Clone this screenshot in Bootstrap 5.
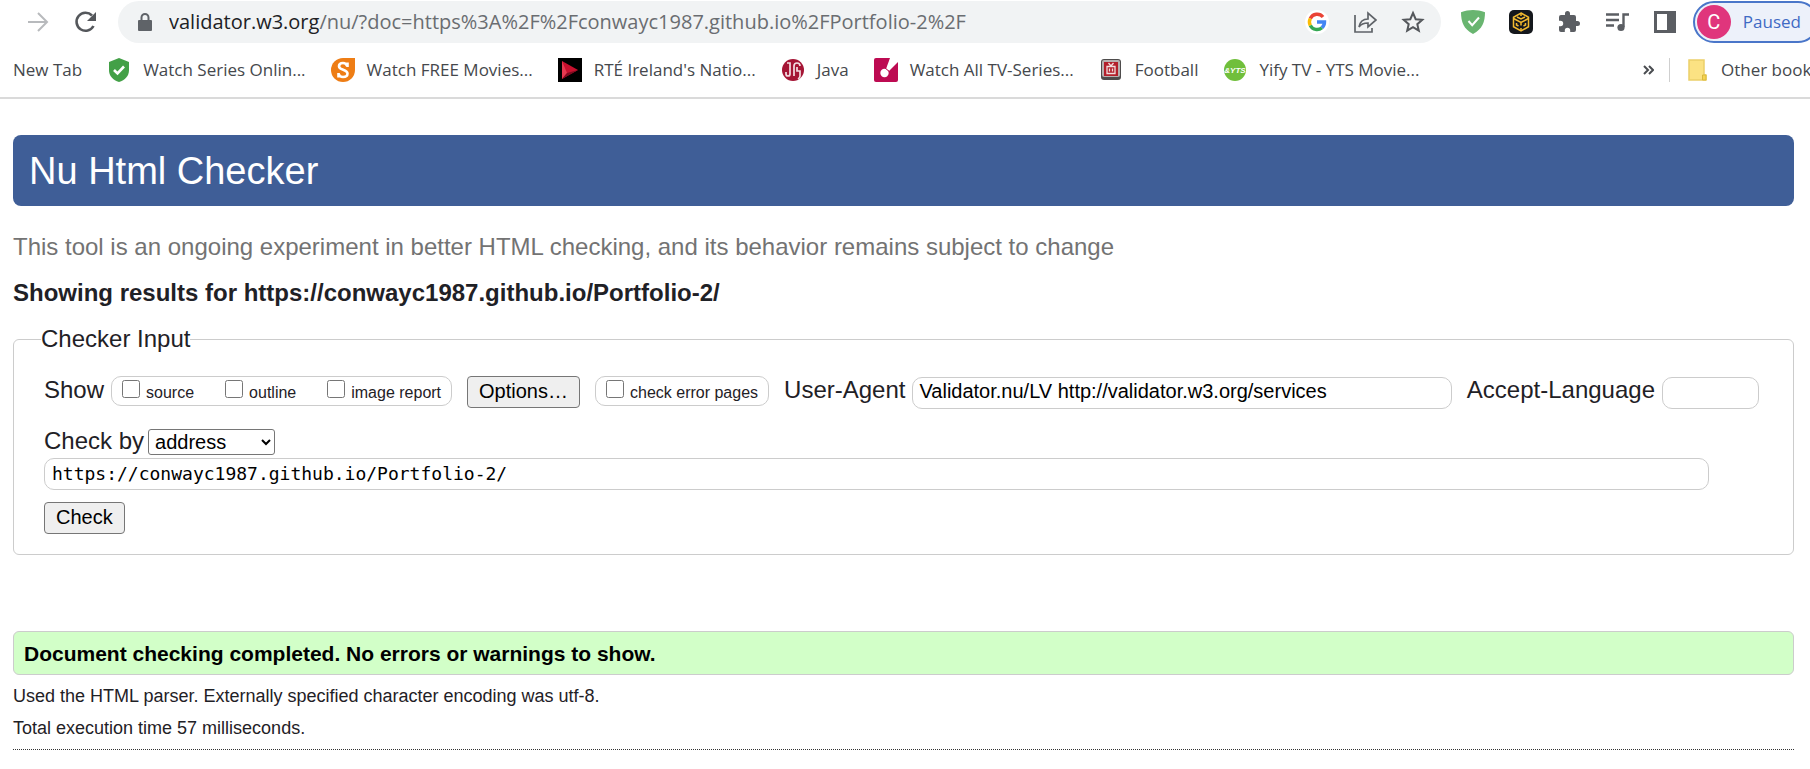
<!DOCTYPE html>
<html lang="en">
<head>
<meta charset="utf-8">
<meta name="viewport" content="width=device-width, initial-scale=1">
<title>Showing results for https://conwayc1987.github.io/Portfolio-2/ - Nu Html Checker</title>
<link rel="stylesheet" href="https://cdn.jsdelivr.net/npm/bootstrap@5.3.0/dist/css/bootstrap.min.css">
<style>
  body { font-family: "Liberation Sans", Arial, sans-serif; font-size: 24px; line-height: 28px; color: #1f2126; background: #fff; overflow-x: hidden; }
  svg { display: block; flex: none; }
  button, input, select { font-family: inherit; color: #000; }

  /* browser chrome */
  .browser { font-family: "Open Sans", "Noto Sans", sans-serif; border-bottom: 2px solid #dadada; overflow: hidden; }
  .toolbar { padding: 1px 0 0 26px; gap: 24px; margin-right: -9px; }
  .browser button { border: 0; background: none; padding: 0; }
  .omnibox { background: #f1f3f4; height: 42px; margin: 0 -4px 0 -4px; padding: 0 16px 0 19px; min-width: 0; }
  .address { font-size: 20px; line-height: 26px; color: #6a6d71; white-space: nowrap; }
  .address b { font-weight: 400; color: #202124; }
  .profile { height: 42px; border: 2px solid #4a76c9 !important; background: #edf1fa !important; color: #3f6ac4; font-size: 17px; padding: 0 16px 0 2px !important; gap: 12px; margin-left: -8px; }
  .avatar { width: 34px; height: 34px; background: #e0357c; color: #fff; font: 20px/34px Roboto, sans-serif; }
  .bookmarks { height: 54px; font-size: 17px; line-height: 24px; }
  .bookmarks a { color: #45484c; text-decoration: none; white-space: nowrap; gap: 12px; }
  .bookmark-list { padding-left: 13px; gap: 25px; min-width: 0; overflow: hidden; }
  .others { flex: 0 0 167px; overflow: hidden; gap: 15px; }
  .divider { width: 1px; height: 24px; background: #cfcfcf; flex: none; }

  /* validator page */
  main { padding: 36px 16px 0 13px; }
  h1 { background: #3f5e97; color: #fff; font-size: 38px; line-height: 44px; border-radius: 8px; padding: 14px 16px 13px; margin: 0 0 27px; }
  .tagline { color: #737373; margin: 0 0 18px; }
  h2 { font-size: 24px; line-height: 28px; font-weight: 700; margin: 0 0 18px; }
  fieldset.checker { border: 1px solid #ccc; border-radius: 6px; padding: 0 30px 20px; margin-bottom: 76px; }
  .checker legend { font-size: 24px; line-height: 28px; margin: 0 0 23px -3px; padding: 0; }
  .options-row { margin-bottom: 18px; gap: 15px; }
  .field-group { gap: 7px; }
  .pill { border: 1px solid #ccc; border-radius: 10px; font-size: 16px; line-height: 20px; padding: 3px 10px 2px; gap: 31px; }
  .pill label { gap: 6px; }
  .pill input { width: 18px; height: 18px; margin: 0; }
  .plain-btn { border: 1px solid #767676; border-radius: 4px; background: #efefef; font-size: 20px; line-height: 24px; padding: 2px 11px 4px; }
  .text-field { border: 1px solid #ccc; border-radius: 10px; background: #fff; font-size: 20px; line-height: 24px; height: 32px; padding: 2px 6px 4px; min-width: 0; }
  .language { width: 97px; }
  .url-field { font-family: "DejaVu Sans Mono", monospace; font-size: 18px; width: calc(100% - 54px); margin: 3px 0 12px; padding: 3px 7px; }
  .method { border: 1px solid #767676; border-radius: 3px; background: #fff; font-size: 20px; height: 26px; width: 127px; padding: 0 2px; }
  .success-box { background: #d2ffc8; border: 1px solid #ccc; border-radius: 6px; color: #000; font-size: 21px; font-weight: 700; line-height: 25px; padding: 9px 10px 8px; margin: 0 0 9px; }
  .details { font-size: 18px; line-height: 24px; margin: 0 0 8px; }
  .end-rule { border: 0; border-top: 1px dotted #333; opacity: 1; margin: 9px 0 0; }
</style>
</head>
<body>
<header class="browser">
  <div class="toolbar d-flex align-items-center">
    <button aria-label="Forward"><svg width="24" height="24" viewBox="0 0 24 24" fill="none" stroke="#b8babd" stroke-width="2"><path d="M2 12h19M12 3l9 9-9 9"/></svg></button>
    <button aria-label="Reload"><svg width="24" height="24" viewBox="0 0 24 24" fill="none" stroke="#54575b" stroke-width="2.600"><path d="M19.500 16A9 9 0 1 1 18 5.500"/><path d="M22 2v9h-9z" fill="#54575b" stroke="none"/></svg></button>
    <div class="omnibox d-flex align-items-center flex-grow-1 rounded-pill">
      <svg width="16" height="20" viewBox="0 0 16 20"><path d="M2 8h12q1 0 1 1v9q0 1-1 1H2q-1 0-1-1V9q0-1 1-1z" fill="#5f6368"/><path d="M4.500 9V5.500a3.500 3.500 0 0 1 7 0V9" fill="none" stroke="#5f6368" stroke-width="2"/></svg>
      <div class="address flex-grow-1 overflow-hidden ms-3"><b>validator.w3.org</b>/nu/?doc=https%3A%2F%2Fconwayc1987.github.io%2FPortfolio-2%2F</div>
      <div class="d-flex align-items-center gap-4">
        <button aria-label="Google"><svg width="24" height="24" viewBox="0 0 24 24"><circle cx="12" cy="12" r="12" fill="#fff"/><g fill="none" stroke-width="3.400"><path d="M18 7A7.600 7.600 0 0 0 5.300 8.500" stroke="#ea4335"/><path d="M5.300 8.500a7.600 7.600 0 0 0 0 7" stroke="#fbbc05"/><path d="M5.300 15.500A7.600 7.600 0 0 0 17 17.700" stroke="#34a853"/><path d="M17 17.700A7.600 7.600 0 0 0 19.500 12H12" stroke="#4285f4"/></g></svg></button>
        <button aria-label="Share"><svg width="24" height="24" viewBox="0 0 24 24" fill="none" stroke="#5f6368" stroke-width="1.700"><path d="M2 5v17h17v-4"/><path d="M6 17c1-6 4-8 9-8V3l8 7-8 7v-4c-4 0-7 1-9 4z"/></svg></button>
        <button aria-label="Bookmark this page"><svg width="24" height="24" viewBox="0 0 24 24" fill="none" stroke="#54575b" stroke-width="2"><path d="M12 3l2.700 6.200 6.600.6-5 4.400 1.500 6.500-5.800-3.500-5.800 3.500 1.500-6.500-5-4.400 6.600-.6z"/></svg></button>
      </div>
    </div>
    <div class="d-flex align-items-center gap-4">
      <button aria-label="AdGuard"><svg width="24" height="24" viewBox="0 0 24 24"><path d="M12 0c4 0 8 .8 12 2.300C24 12 21.500 19 12 24 2.500 19 0 12 0 2.300 4 .8 8 0 12 0z" fill="#69b570"/><path d="M7.500 11l3.700 4.200L18 7.500" fill="none" stroke="#fff" stroke-width="2"/></svg></button>
      <button aria-label="Binance Wallet"><svg width="24" height="24" viewBox="0 0 24 24"><rect width="24" height="24" rx="5" fill="#15181d"/><g fill="none" stroke="#f3ba2f" stroke-width="1.500"><path d="M12 3l7.500 4.300v9.400L12 21l-7.500-4.300V7.300z"/><path d="M4.500 8.500l7.500 4 7.500-4M12 12.500v3M8 7l4 2 4-2M12 3v3M7.500 13v2l2 1M16.500 13v2l-2 1M12 18v3"/></g></svg></button>
      <button aria-label="Extensions"><svg width="24" height="24" viewBox="0 0 24 24" fill="#5b5e63"><path d="M20.500 11H19V7a2 2 0 0 0-2-2h-4V3.500a2.500 2.500 0 0 0-5 0V5H4a2 2 0 0 0-2 2v3.800h1.500a2.700 2.700 0 0 1 0 5.400H2V20a2 2 0 0 0 2 2h3.800v-1.500a2.700 2.700 0 0 1 5.400 0V22H17a2 2 0 0 0 2-2v-4h1.500a2.500 2.500 0 0 0 0-5z"/></svg></button>
      <button aria-label="Media controls"><svg width="24" height="24" viewBox="0 0 24 24"><path d="M1 4.500h13M1 10h13M1 15.500h8M18.500 17V4.500H24" stroke="#5b5e63" stroke-width="2.400" fill="none"/><circle cx="16" cy="17.500" r="3.600" fill="#5b5e63"/></svg></button>
      <button aria-label="Side panel"><svg width="24" height="24" viewBox="0 0 24 24"><path d="M1 1h22v22H1zM4 4v16h10V4z" fill="#5b5e63" fill-rule="evenodd"/></svg></button>
    </div>
    <button class="profile d-flex align-items-center rounded-pill flex-shrink-0"><span class="avatar rounded-circle text-center">C</span>Paused</button>
  </div>
  <nav class="bookmarks d-flex align-items-center justify-content-between" aria-label="Bookmarks">
    <div class="bookmark-list d-flex align-items-center">
      <a href="#">New Tab</a>
      <a href="#" class="d-flex align-items-center"><svg width="24" height="24" viewBox="0 0 24 24"><path d="M12 0l10 4v8c0 6-4 10-10 12C6 22 2 18 2 12V4z" fill="#43a047"/><path d="M7 12l3.500 3.500L17 8.500" fill="none" stroke="#fff" stroke-width="2.600"/></svg>Watch Series Onlin...</a>
      <a href="#" class="d-flex align-items-center"><svg width="24" height="24" viewBox="0 0 24 24"><path d="M12 0h12v12A12 12 0 1 1 12 0z" fill="#ee7d15"/><path d="M16.500 9V4.500M7.500 15v4.500M16 8c-.5-2-2-3-4-3-2.500 0-4 1.300-4 3.200 0 4.300 8.500 2.700 8.500 7.300 0 2.200-1.700 3.500-4.500 3.500-2.400 0-4-1.500-4.500-3.500" fill="none" stroke="#fff" stroke-width="2.600"/></svg>Watch FREE Movies...</a>
      <a href="#" class="d-flex align-items-center"><svg width="24" height="24" viewBox="0 0 24 24"><path d="M0 0h24v24H0z"/><path d="M4 3l16 9L4 21z" fill="#c8102e"/><path d="M4 3l5 12-5 6z" fill="#e63950"/><path d="M9 15l11-3L4 21z" fill="#7d0b20"/></svg>RTÉ Ireland's Natio...</a>
      <a href="#" class="d-flex align-items-center"><svg width="24" height="24" viewBox="0 0 24 24"><circle cx="12" cy="12" r="11" fill="#a51535"/><path d="M5 14v2q0 2 2 2t2-2V5h-3M13 18V8q0-3 3-3t3 3M16 9v4h3v5q0 2-2 3" fill="none" stroke="#f3dde2" stroke-width="1.700"/></svg>Java</a>
      <a href="#" class="d-flex align-items-center"><svg width="24" height="24" viewBox="0 0 24 24"><rect width="24" height="24" rx="2" fill="#bd0b52"/><path d="M24 0v4l-9 9-3-2 4-11z" fill="#fff"/><circle cx="10.500" cy="15" r="4.200" fill="#fff"/><path d="M11 10l5 4" stroke="#bd0b52"/></svg>Watch All TV-Series...</a>
      <a href="#" class="d-flex align-items-center"><svg width="24" height="24" viewBox="0 0 24 24"><rect x="2" y="1" width="20" height="21" rx="3" fill="#4e4c4c"/><rect x="3" y="2" width="18" height="17" rx="2" fill="#b7b1b1"/><rect x="5" y="4" width="14" height="14" fill="#b31f2b"/><path d="M8 8.500h8v7H8zM9.500 5l2.500 3 2.500-3M10.500 10.500v3M13.500 10.500v3" fill="none" stroke="#f2dede" stroke-width="1.300"/></svg>Football</a>
      <a href="#" class="d-flex align-items-center"><svg width="24" height="24" viewBox="0 0 24 24"><circle cx="12" cy="12" r="11" fill="#70bf3b"/><text x="12" y="15" text-anchor="middle" font-family="Liberation Sans" font-size="8" font-style="italic" font-weight="700" fill="#fff">&amp;YTS</text></svg>Yify TV - YTS Movie...</a>
    </div>
    <div class="others d-flex align-items-center">
      <button aria-label="More bookmarks"><svg width="11" height="12" viewBox="0 0 11 12" fill="none" stroke="#4a4d51" stroke-width="2"><path d="M1 2l4 4-4 4M6 2l4 4-4 4"/></svg></button>
      <span class="divider"></span>
      <a href="#" class="d-flex align-items-center"><svg width="24" height="24" viewBox="0 0 24 24"><path d="M4 2h15v15h2v5H4z" fill="#fbe283" stroke="#ecd06a" stroke-width="1.500"/><path d="M17.500 22v-5H21v5z" fill="#f5d352" stroke="#d9b93a"/></svg>Other bookmarks</a>
    </div>
  </nav>
</header>

<main>
  <h1 class="fw-normal">Nu Html Checker</h1>
  <p class="tagline">This tool is an ongoing experiment in better HTML checking, and its behavior remains subject to change</p>
  <h2>Showing results for https://conwayc1987.github.io/Portfolio-2/</h2>

  <form>
    <fieldset class="checker">
      <legend class="float-none w-auto">Checker Input</legend>
      <div class="options-row d-flex align-items-baseline">
        <div class="field-group d-flex align-items-baseline">
          <span>Show</span>
          <div class="pill d-flex align-items-baseline">
            <label class="d-flex align-items-baseline"><input type="checkbox">source</label>
            <label class="d-flex align-items-baseline"><input type="checkbox">outline</label>
            <label class="d-flex align-items-baseline text-nowrap"><input type="checkbox">image report</label>
          </div>
        </div>
        <button type="button" class="plain-btn">Options…</button>
        <div class="pill d-flex align-items-baseline">
          <label class="d-flex align-items-baseline text-nowrap"><input type="checkbox">check error pages</label>
        </div>
        <div class="field-group d-flex align-items-baseline flex-grow-1">
          <label for="agent" class="text-nowrap">User-Agent</label>
          <input id="agent" type="text" class="text-field flex-grow-1" value="Validator.nu/LV http://validator.w3.org/services">
        </div>
        <div class="field-group d-flex align-items-baseline me-1">
          <label for="lang" class="text-nowrap">Accept-Language</label>
          <input id="lang" type="text" class="text-field language">
        </div>
      </div>
      <div class="d-flex align-items-baseline">
        <label for="method" class="me-1">Check by</label>
        <select id="method" class="method"><option>address</option><option>file upload</option><option>text input</option></select>
      </div>
      <input type="text" class="text-field url-field d-block" aria-label="Document address" value="https://conwayc1987.github.io/Portfolio-2/">
      <button type="submit" class="plain-btn d-block">Check</button>
    </fieldset>
  </form>

  <p class="success-box">Document checking completed. No errors or warnings to show.</p>
  <p class="details">Used the HTML parser. Externally specified character encoding was utf-8.</p>
  <p class="details">Total execution time 57 milliseconds.</p>
  <hr class="end-rule">
</main>
<script src="https://cdn.jsdelivr.net/npm/bootstrap@5.3.0/dist/js/bootstrap.bundle.min.js"></script>
</body>
</html>
